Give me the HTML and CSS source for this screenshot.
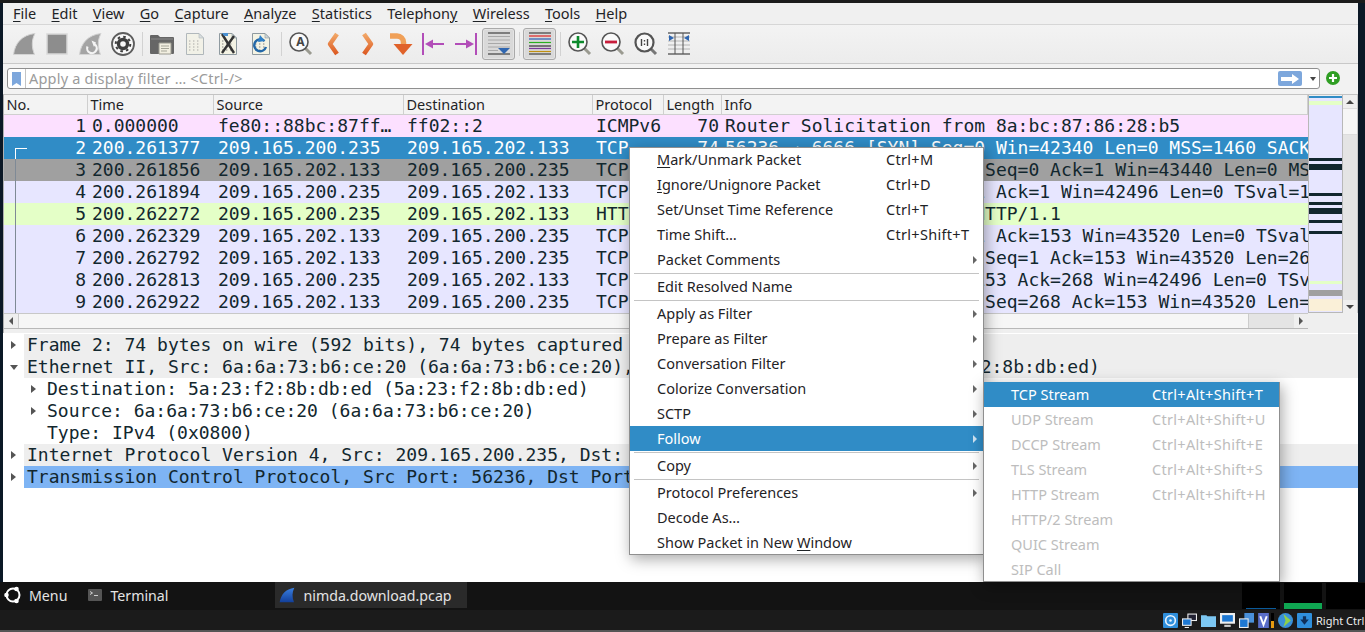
FILE: index.html
```html
<!DOCTYPE html>
<html lang="en">
<head>
<meta charset="utf-8">
<title>nimda.download.pcap</title>
<link rel="stylesheet" href="styles.css">
</head>
<body>
<svg class="defs" width="0" height="0">
  <defs>
    <linearGradient id="og" x1="0" y1="0" x2="0" y2="1"><stop offset="0" stop-color="#f2a868"/><stop offset="1" stop-color="#dc5a22"/></linearGradient>
    <symbol id="fin" viewBox="0 0 24 24"><path d="M1.500 22.500C3 11 10 3 23 1.500 19.500 8 19.500 15 22.500 22.500Z"/></symbol>
    <symbol id="doc" viewBox="0 0 24 24">
      <path d="M3.500 1.500H16L20.500 6V22.500H3.500Z" fill="#f4f3e4" stroke="#8f9aa0"/>
      <path d="M16 1.500V6H20.500Z" fill="#cfd6da" stroke="#8f9aa0" stroke-width=".6"/>
      <path d="M6 9h2m2 0h2m2 0h2M6 12h2m2 0h2m2 0h2M6 15h2m2 0h2m2 0h2M6 18h2m2 0h2m2 0h2" stroke="#a9a9a0" stroke-width="1.400" stroke-dasharray="1 .6"/>
    </symbol>
    <symbol id="lens" viewBox="0 0 24 24">
      <path d="M15.500 15.500L22 22" stroke="#9a9a90" stroke-width="3"/>
      <circle cx="10" cy="10" r="9" fill="#fafafa" stroke="#555" stroke-width="1.600"/>
    </symbol>
  </defs>
</svg>
<div class="topstrip"></div>
<div class="desktop">
  <div class="edge edge-left"></div>
  <main class="window">
    <nav class="menubar">
      <span class="mb"><u>F</u>ile</span>
      <span class="mb"><u>E</u>dit</span>
      <span class="mb"><u>V</u>iew</span>
      <span class="mb"><u>G</u>o</span>
      <span class="mb"><u>C</u>apture</span>
      <span class="mb"><u>A</u>nalyze</span>
      <span class="mb"><u>S</u>tatistics</span>
      <span class="mb">Telephon<u>y</u></span>
      <span class="mb"><u>W</u>ireless</span>
      <span class="mb"><u>T</u>ools</span>
      <span class="mb"><u>H</u>elp</span>
    </nav>
    <div class="toolbar">
      <span class="tb"><svg class="ic fin-gray"><use href="#fin"/></svg></span>
      <span class="tb"><svg class="ic" viewBox="0 0 24 24"><rect x="2" y="2" width="20" height="20" fill="#8d8d8d" stroke="#d9d9d9" stroke-width="1.500"/></svg></span>
      <span class="tb"><svg class="ic" viewBox="0 0 24 24"><path class="fin-path" d="M1.500 22.500C3 11 10 3 23 1.500 19.500 8 19.500 15 22.500 22.500Z"/><path d="M16 12a4.800 4.800 0 1 1-6.500 2.500" fill="none" stroke="#f4f4f4" stroke-width="2.200"/><path d="M13.500 8.500l4.500 2-2 4.500z" fill="#f4f4f4"/></svg></span>
      <span class="tb"><svg class="ic" viewBox="0 0 24 24"><circle cx="12" cy="12" r="11" fill="#f8f8f8" stroke="#5d5d5d" stroke-width="1.800"/><circle cx="12" cy="12" r="6.200" fill="#3f3f3f"/><circle cx="12" cy="12" r="7.300" fill="none" stroke="#3f3f3f" stroke-width="2" stroke-dasharray="2.600 3.130"/><circle cx="12" cy="12" r="2.800" fill="#f8f8f8"/></svg></span>
      <span class="tsep s6"></span>
      <span class="tb"><svg class="ic" viewBox="0 0 24 24"><path d="M0 4a1 1 0 0 1 1-1h7l2 2h13a1 1 0 0 1 1 1v15a1 1 0 0 1-1 1H1a1 1 0 0 1-1-1Z" fill="#666"/><path d="M1 7h22" stroke="#8a8a8a"/><path d="M9 11h12v11H9z" fill="#f1eee0" stroke="#9a9a90"/><path d="M11 14h8M11 16.500h8M11 19h6" stroke="#a5a598"/></svg></span>
      <span class="tb"><svg class="ic fade"><use href="#doc"/></svg></span>
      <span class="tb"><svg class="ic" viewBox="0 0 24 24"><use href="#doc" width="24" height="24"/><path d="M6 2l12 19M18 4L6 21" stroke="#333" stroke-width="2.400"/><path d="M6 1h6v3H8z" fill="#4a90d0"/></svg></span>
      <span class="tb"><svg class="ic" viewBox="0 0 24 24"><use href="#doc" width="24" height="24"/><path d="M15.500 9A6 6 0 1 0 17 15" fill="none" stroke="#2468a8" stroke-width="2.400"/><path d="M11 3l5 6-7 1z" fill="#2f80c8"/></svg></span>
      <span class="tsep s7"></span>
      <span class="tb"><svg class="ic"><use href="#lens"/></svg><b class="lens-a">A</b></span>
      <span class="tb"><svg class="ic" viewBox="0 0 24 24"><path d="M15 2L8 12l7 10" class="arw"/></svg></span>
      <span class="tb"><svg class="ic" viewBox="0 0 24 24"><path d="M9 2l7 10-7 10" class="arw"/></svg></span>
      <span class="tb"><svg class="ic" viewBox="0 0 24 24"><path d="M2 4h7a6.500 6.500 0 0 1 6.500 6.500V14" fill="none" stroke="#f0a058" stroke-width="5.500"/><path d="M5.500 12h19l-9.500 11z" fill="#e0622a"/></svg></span>
      <span class="tb"><svg class="ic" viewBox="0 0 24 24"><path d="M2 1v22" class="pur"/><path d="M10 12h13" class="pur"/><path d="M4 12l8-4.500v9z" fill="#b24db8"/></svg></span>
      <span class="tb"><svg class="ic" viewBox="0 0 24 24"><path d="M22 1v22" class="pur"/><path d="M1 12h13" class="pur"/><path d="M20 12l-8-4.500v9z" fill="#b24db8"/></svg></span>
      <span class="tb pressed"><svg class="ic" viewBox="0 0 24 24"><path d="M1 1h22M1 22h22" stroke="#222" stroke-width="1.200"/><path d="M1 4.500h22M1 8h22M1 11.500h22M1 15h22M1 18.500h10" stroke="#a8a8a8"/><path d="M11 16h12l-6 6z" fill="#2f66b0"/></svg></span>
      <span class="tsep s8"></span>
      <span class="tb pressed"><svg class="ic" viewBox="0 0 24 24"><path d="M1 1h22M1 22h22" stroke="#222" stroke-width="1.200"/><path d="M1 4h22" stroke="#e02020" stroke-width="1.200"/><path d="M1 7h22" stroke="#2a5bb0" stroke-width="1.200"/><path d="M1 10.500h22" stroke="#2ab020" stroke-width="1.200"/><path d="M1 14h22" stroke="#333" stroke-width="1.200"/><path d="M1 16.500h22" stroke="#7a3a9a" stroke-width="1.200"/><path d="M1 19.500h22" stroke="#c09010" stroke-width="1.200"/></svg></span>
      <span class="tsep s7"></span>
      <span class="tb"><svg class="ic"><use href="#lens"/></svg><svg class="over" viewBox="0 0 24 24"><path d="M10 4v12M4 10h12" stroke="#0c8a2c" stroke-width="2.600"/></svg></span>
      <span class="tb"><svg class="ic"><use href="#lens"/></svg><svg class="over" viewBox="0 0 24 24"><path d="M4 10h12" stroke="#c81e3c" stroke-width="2.800"/></svg></span>
      <span class="tb"><svg class="ic" viewBox="0 0 24 24"><path d="M15.500 15.500L22 22" stroke="#777" stroke-width="3"/><circle cx="10.500" cy="10.500" r="9" fill="#fafafa" stroke="#555" stroke-width="2.200"/><path d="M7.500 7v7M13.500 7v7M10.500 8v1.500M10.500 11.500V13" stroke="#444" stroke-width="1.400"/></svg></span>
      <span class="tb"><svg class="ic" viewBox="0 0 24 24"><path d="M1 1h22M1 22h22" stroke="#222" stroke-width="1.200"/><path d="M1 5h22M1 9h22M1 13h22M1 17h22" stroke="#b4b4b4"/><path d="M8 1v21M16 1v21" stroke="#555"/><path d="M2 3v6l5-3zM22 3v6l-5-3z" fill="#2f66b0"/></svg></span>
    </div>
    <div class="filterbar">
      <div class="filterfield">
        <span class="bookmark"><svg width="9" height="14" viewBox="0 0 9 14"><path d="M0 0h9v14L4.500 11 0 14Z" fill="#7da7dc"/></svg></span>
        <span class="placeholder">Apply a display filter … &lt;Ctrl-/&gt;</span>
        <span class="applybtn"><svg width="18" height="10" viewBox="0 0 18 10"><path d="M0 3h11V0l7 5-7 5V7H0Z" fill="#fff"/></svg></span>
        <span class="dropdown"></span>
      </div>
      <svg class="addfilter" width="14" height="14" viewBox="0 0 14 14"><circle cx="7" cy="7" r="7" fill="#2f9e23"/><path d="M7 3v8M3 7h8" stroke="#fff" stroke-width="2.200"/></svg>
    </div>
    <section class="packetpane">
      <div class="listcol">
        <div class="cols header">
          <span class="hc">No.</span><span class="hc">Time</span><span class="hc">Source</span><span class="hc">Destination</span><span class="hc">Protocol</span><span class="hc">Length</span><span class="hc">Info</span>
        </div>
        <div class="cols row icmp"><span class="no">1</span><span class="tm">0.000000</span><span class="sr">fe80::88bc:87ff…</span><span class="ds">ff02::2</span><span class="pr">ICMPv6</span><span class="ln">70</span><span class="in">Router Solicitation from 8a:bc:87:86:28:b5</span></div>
        <div class="cols row sel"><span class="no first">2</span><span class="tm">200.261377</span><span class="sr">209.165.200.235</span><span class="ds">209.165.202.133</span><span class="pr">TCP</span><span class="ln">74</span><span class="in">56236 → 6666 [SYN] Seq=0 Win=42340 Len=0 MSS=1460 SACK_PERM</span></div>
        <div class="cols row grey"><span class="no thread">3</span><span class="tm">200.261856</span><span class="sr">209.165.202.133</span><span class="ds">209.165.200.235</span><span class="pr">TCP</span><span class="ln">74</span><span class="in">6666 → 56236 [SYN, ACK] Seq=0 Ack=1 Win=43440 Len=0 MSS=1460 SACK_PERM</span></div>
        <div class="cols row tcp"><span class="no thread">4</span><span class="tm">200.261894</span><span class="sr">209.165.200.235</span><span class="ds">209.165.202.133</span><span class="pr">TCP</span><span class="ln">66</span><span class="in">56236 → 6666 [ACK] Seq=1 Ack=1 Win=42496 Len=0 TSval=1520309</span></div>
        <div class="cols row http"><span class="no thread">5</span><span class="tm">200.262272</span><span class="sr">209.165.200.235</span><span class="ds">209.165.202.133</span><span class="pr">HTTP</span><span class="ln">218</span><span class="in">GET /dl/nimda.download HTTP/1.1</span></div>
        <div class="cols row tcp"><span class="no thread">6</span><span class="tm">200.262329</span><span class="sr">209.165.202.133</span><span class="ds">209.165.200.235</span><span class="pr">TCP</span><span class="ln">66</span><span class="in">6666 → 56236 [ACK] Seq=1 Ack=153 Win=43520 Len=0 TSval=2530911</span></div>
        <div class="cols row tcp"><span class="no thread">7</span><span class="tm">200.262792</span><span class="sr">209.165.202.133</span><span class="ds">209.165.200.235</span><span class="pr">TCP</span><span class="ln">333</span><span class="in">6666 → 56236 [PSH, ACK] Seq=1 Ack=153 Win=43520 Len=267 TSval=2530911</span></div>
        <div class="cols row tcp"><span class="no thread">8</span><span class="tm">200.262813</span><span class="sr">209.165.200.235</span><span class="ds">209.165.202.133</span><span class="pr">TCP</span><span class="ln">66</span><span class="in">56236 → 6666 [ACK] Seq=153 Ack=268 Win=42496 Len=0 TSval=1520309</span></div>
        <div class="cols row tcp"><span class="no thread">9</span><span class="tm">200.262922</span><span class="sr">209.165.202.133</span><span class="ds">209.165.200.235</span><span class="pr">TCP</span><span class="ln">66</span><span class="in">6666 → 56236 [FIN, ACK] Seq=268 Ack=153 Win=43520 Len=0 TSval=2530911</span></div>
      </div>
      <div class="minimap"></div>
      <div class="vscroll">
        <span class="vbtn"><i class="tri-up"></i></span>
        <span class="vthumb"></span>
        <span class="vtrack"></span>
        <span class="vbtn"><i class="tri-down"></i></span>
      </div>
    </section>
    <div class="hscrollrow">
      <div class="hscroll">
        <span class="hbtn"><i class="tri-left"></i></span>
        <span class="hthumb"></span>
        <span class="htrack"></span>
        <span class="hbtn"><i class="tri-right"></i></span>
      </div>
    </div>
    <section class="details">
      <div class="dr top"><i class="tw closed"></i><span>Frame 2: 74 bytes on wire (592 bits), 74 bytes captured (592 bits)</span></div>
      <div class="dr top"><i class="tw open"></i><span>Ethernet II, Src: 6a:6a:73:b6:ce:20 (6a:6a:73:b6:ce:20), Dst: 5a:23:f2:8b:db:ed (5a:23:f2:8b:db:ed)</span></div>
      <div class="dr sub"><i class="tw closed"></i><span>Destination: 5a:23:f2:8b:db:ed (5a:23:f2:8b:db:ed)</span></div>
      <div class="dr sub"><i class="tw closed"></i><span>Source: 6a:6a:73:b6:ce:20 (6a:6a:73:b6:ce:20)</span></div>
      <div class="dr sub"><i class="tw none"></i><span>Type: IPv4 (0x0800)</span></div>
      <div class="dr top"><i class="tw closed"></i><span>Internet Protocol Version 4, Src: 209.165.200.235, Dst: 209.165.202.133</span></div>
      <div class="dr top hl"><i class="tw closed"></i><span>Transmission Control Protocol, Src Port: 56236, Dst Port: 6666, Seq: 0, Len: 0</span></div>
    </section>
  </main>
  <div class="edge edge-right"></div>
</div>
<footer class="taskbar">
  <div class="panelrow">
    <svg class="ubuntu" width="18" height="18" viewBox="0 0 18 18"><circle cx="9" cy="9" r="6.500" fill="none" stroke="#fff" stroke-width="2"/><circle cx="2.500" cy="9" r="2.300" fill="#fff"/><circle cx="12.500" cy="3" r="2.300" fill="#fff"/><circle cx="12.500" cy="15" r="2.300" fill="#fff"/></svg>
    <span class="tlabel menu-l">Menu</span>
    <svg class="term" width="14" height="12" viewBox="0 0 14 12"><rect width="14" height="12" rx="1" fill="#555"/><path d="M2 2.500l2.500 1.500L2 5.500M6 6.500h4" stroke="#ddd" fill="none" stroke-width=".9"/></svg>
    <span class="tlabel term-l">Terminal</span>
    <span class="tasktab">
      <svg width="16" height="16" viewBox="0 0 24 24"><defs><linearGradient id="bf" x1="0" y1="0" x2="0" y2="1"><stop offset="0" stop-color="#3a7fe0"/><stop offset="1" stop-color="#123f9a"/></linearGradient></defs><path d="M1 23C3 11 10 3 23 1 19.500 8 19.500 15 22.500 23Z" fill="url(#bf)"/></svg>
      <span class="tlabel">nimda.download.pcap</span>
    </span>
    <span class="graphs">
      <span class="graph g1"></span>
      <span class="graph g2"></span>
      <span class="graph g3"></span>
    </span>
  </div>
  <div class="trayrow">
    <svg class="tray" viewBox="0 0 14 14"><rect width="14" height="14" rx="1" fill="#2f8fdc"/><circle cx="7" cy="7" r="4.500" fill="none" stroke="#eaf4ff" stroke-width="1.500"/><circle cx="7" cy="7" r="1.200" fill="#eaf4ff"/></svg>
    <svg class="tray" viewBox="0 0 14 14"><rect x="5.500" y="1" width="8" height="6" fill="#223" stroke="#eee"/><rect x=".5" y="5.500" width="8" height="6" fill="#1e78d2" stroke="#eee"/><path d="M2.500 13.500h4" stroke="#eee"/></svg>
    <svg class="tray" viewBox="0 0 14 14"><path d="M0 2h5l1 1h8v10H0Z" fill="#7cc7f2"/></svg>
    <svg class="tray" viewBox="0 0 14 14"><rect x="0" y="0" width="14" height="10" fill="#eee"/><rect x="2" y="2" width="10" height="6" fill="#1e78d2"/><rect x="4" y="11" width="6" height="2" fill="#ccc"/></svg>
    <svg class="tray" viewBox="0 0 14 14"><rect x="5" y="0" width="9" height="9" fill="#4a90d9"/><rect x=".5" y="5.500" width="8" height="8" fill="#1e78d2" stroke="#eee"/></svg>
    <svg class="tray tray-v" viewBox="0 0 10 14"><rect width="10" height="14" fill="#5a6ec8"/><path d="M2 3l3 8 3-8" stroke="#fff" fill="none" stroke-width="1.800"/></svg>
    <span class="ind"></span>
    <svg class="tray" viewBox="0 0 14 14"><circle cx="7" cy="7" r="7" fill="#3a90d8"/><path d="M5 1l7 6-7 6 2-6Z" fill="#8fd04a"/></svg>
    <svg class="tray" viewBox="0 0 14 14"><rect width="14" height="14" rx="1" fill="#2f8fdc"/><path d="M7 11L3 6h2.500V3h3v3H11Z" fill="#10305a"/></svg>
    <span class="rightctrl">Right Ctrl</span>
  </div>
</footer>
<div class="ctx mainmenu">
  <div class="mi"><span class="lb"><u>M</u>ark/Unmark Packet</span><span class="key">Ctrl+M</span></div>
  <div class="mi"><span class="lb"><u>I</u>gnore/Unignore Packet</span><span class="key">Ctrl+D</span></div>
  <div class="mi"><span class="lb">Set/Unset Time Reference</span><span class="key">Ctrl+T</span></div>
  <div class="mi"><span class="lb">Time Shift…</span><span class="key">Ctrl+Shift+T</span></div>
  <div class="mi more"><span class="lb">Packet Comments</span></div>
  <div class="msep"></div>
  <div class="mi"><span class="lb">Edit Resolved Name</span></div>
  <div class="msep"></div>
  <div class="mi more"><span class="lb">Apply as Filter</span></div>
  <div class="mi more"><span class="lb">Prepare as Filter</span></div>
  <div class="mi more"><span class="lb">Conversation Filter</span></div>
  <div class="mi more"><span class="lb">Colorize Conversation</span></div>
  <div class="mi more"><span class="lb">SCTP</span></div>
  <div class="mi more active"><span class="lb">Follow</span></div>
  <div class="msep"></div>
  <div class="mi more"><span class="lb">Copy</span></div>
  <div class="msep"></div>
  <div class="mi more"><span class="lb">Protocol Preferences</span></div>
  <div class="mi"><span class="lb">Decode As…</span></div>
  <div class="mi"><span class="lb">Show Packet in New <u>W</u>indow</span></div>
</div>
<div class="ctx submenu">
  <div class="mi active"><span class="lb">TCP Stream</span><span class="key">Ctrl+Alt+Shift+T</span></div>
  <div class="mi off"><span class="lb">UDP Stream</span><span class="key">Ctrl+Alt+Shift+U</span></div>
  <div class="mi off"><span class="lb">DCCP Stream</span><span class="key">Ctrl+Alt+Shift+E</span></div>
  <div class="mi off"><span class="lb">TLS Stream</span><span class="key">Ctrl+Alt+Shift+S</span></div>
  <div class="mi off"><span class="lb">HTTP Stream</span><span class="key">Ctrl+Alt+Shift+H</span></div>
  <div class="mi off"><span class="lb">HTTP/2 Stream</span></div>
  <div class="mi off"><span class="lb">QUIC Stream</span></div>
  <div class="mi off"><span class="lb">SIP Call</span></div>
</div>
</body>
</html>
```
FILE: styles.css
```css
* { box-sizing: border-box; }
html, body { margin: 0; padding: 0; }
body {
  position: relative;
  width: 1365px;
  height: 632px;
  overflow: hidden;
  background: #0d1620;
  font-family: "Noto Sans", "Open Sans", sans-serif;
  font-size: 14.5px;
  color: #1f2326;
  display: flex;
  flex-direction: column;
}
.defs { position: absolute; }
.topstrip { height: 3px; background: #1b1b1b; flex: none; }
.desktop { display: flex; height: 579px; flex: none; }
.edge { flex: none; background: #0b1826; }
.edge-left { width: 3px; }
.edge-right { width: 7px; }
.window {
  width: 1355px;
  background: #efefef;
  display: flex;
  flex-direction: column;
}

/* menu bar */
.menubar {
  height: 22px;
  flex: none;
  display: flex;
  align-items: center;
  padding: 0 0 2px 10px;
  border-bottom: 1px solid #d6d6d6;
  background: #f0f0f0;
  font-size: 14.5px;
}
.mb { margin-right: 15.3px; white-space: nowrap; line-height: 20px; }
u { text-underline-offset: 2px; text-decoration-thickness: 1px; }

/* toolbar */
.toolbar {
  height: 39px;
  flex: none;
  display: flex;
  align-items: center;
  padding-left: 4px;
  border-bottom: 1px solid #c8c8c8;
  background: linear-gradient(#f3f3f3, #ececec);
}
.tb {
  position: relative;
  width: 33px;
  height: 32px;
  flex: none;
  display: flex;
  align-items: center;
  justify-content: center;
}
.pressed {
  background: #d9d9d9;
  border: 1px solid #aaa;
  border-radius: 3px;
  box-shadow: inset 0 0 0 1px #e4e4e4;
}
.ic { width: 24px; height: 24px; display: block; overflow: visible; }
.fin-gray { fill: #969696; stroke: #d4d4d4; }
.fin-path { fill: #a4a4a4; stroke: #d4d4d4; }
.fade { opacity: .65; }
.arw { fill: none; stroke: url(#og); stroke-width: 4.500px; stroke-linejoin: round; }
.pur { stroke: #b24db8; stroke-width: 2px; fill: none; }
.lens-a { position: absolute; left: 11px; top: 6px; font-size: 12px; line-height: 16px; font-weight: 700; color: #444; width: 11px; text-align: center; }
.over { position: absolute; left: 5px; top: 4px; width: 24px; height: 24px; }
.tsep { flex: none; position: relative; height: 24px; }
.tsep::after { content: ""; position: absolute; left: 50%; top: 0; bottom: 0; border-left: 1px solid #d2d2d2; }
.s6 { width: 6px; }
.s7 { width: 7px; }
.s8 { width: 8px; }

/* filter */
.filterbar {
  height: 30px;
  flex: none;
  display: flex;
  align-items: flex-start;
  padding: 4px 0 0 4px;
  background: #f2f2f2;
}
.filterfield {
  width: 1313px;
  height: 21px;
  background: #fff;
  border: 1px solid #8f8f8f;
  border-radius: 3px;
  display: flex;
  align-items: center;
}
.bookmark {
  width: 18px;
  height: 19px;
  flex: none;
  display: flex;
  align-items: center;
  justify-content: center;
  border-right: 1px solid #c4c4c4;
}
.placeholder { margin-left: 3px; color: #9b9b9b; flex: 1; font-size: 14.5px; letter-spacing: .2px; line-height: 19px; }
.applybtn {
  width: 24px;
  height: 15px;
  flex: none;
  background: #7da7dc;
  border-radius: 2px;
  display: flex;
  align-items: center;
  justify-content: center;
}
.dropdown {
  width: 17px;
  height: 19px;
  flex: none;
  position: relative;
}
.dropdown::after {
  content: "";
  position: absolute;
  left: 8px;
  top: 8px;
  border: 3.5px solid transparent;
  border-top: 4px solid #444;
  border-bottom: 0;
}
.addfilter { margin: 3px 0 0 6px; flex: none; }

/* packet list */
.packetpane {
  flex: none;
  height: 219px;
  display: flex;
  border-left: 1px solid #b0b0b0;
  border-top: 1px solid #c4c4c4;
}
.listcol { width: 1304px; flex: none; font-family: "DejaVu Sans Mono", monospace; }
.cols {
  display: grid;
  grid-template-columns: 84px 126px 190px 189px 71px 58px 586px;
}
.header {
  height: 20px;
  font-family: "Noto Sans", sans-serif;
  font-size: 14.5px;
  background: #f3f3f3;
  border-bottom: 1px solid #cfcfcf;
}
.hc {
  padding-left: 2.500px;
  line-height: 19px;
  border-right: 1px solid #cfcfcf;
  overflow: hidden;
  white-space: nowrap;
  color: #1f2326;
}
.row {
  height: 22px;
  line-height: 22px;
  font-size: 18px;
  color: #12272e;
  white-space: nowrap;
}
.row span { overflow: hidden; padding-left: 3px; }
.row .no { position: relative; text-align: right; padding-right: 2px; }
.row .tm { padding-left: 4px; }
.row .sr { padding-left: 4px; }
.row .pr { padding-left: 3px; }
.row .ln { text-align: right; padding-right: 3px; }
.icmp { background: #fce0ff; }
.tcp { background: #e7e6ff; }
.http { background: #e4ffc7; }
.grey { background: #a0a0a0; }
.sel { background: #308cc6; color: #fff; }
.first::before {
  content: "";
  position: absolute;
  left: 11px;
  top: 11px;
  bottom: 0;
  width: 11px;
  border-left: 1px solid #fff;
  border-top: 1px solid #fff;
}
.thread::before {
  content: "";
  position: absolute;
  left: 11px;
  top: 0;
  bottom: 0;
  border-left: 1px solid #7f8a96;
}
.minimap {
  width: 35px;
  flex: none;
  height: 218px;
  border: 1px solid #b8b8b8;
  border-width: 0 1px 1px 1px;
  background:
    linear-gradient(to bottom,
      #efefef 0 1px, #308cc6 1px 3px, #e7e6ff 3px 6px, #e4ffc7 6px 10px,
      #e7e6ff 10px 63px, #12272e 63px 66px, #e7e6ff 66px 69px, #12272e 69px 75px,
      #e7e6ff 75px 98px, #12272e 98px 101px, #e7e6ff 101px 107px, #12272e 107px 110px,
      #e7e6ff 110px 113px, #12272e 113px 119px, #e7e6ff 119px 125px, #12272e 125px 128px,
      #e7e6ff 128px 136px, #12272e 136px 139px, #e7e6ff 139px 186px, #e4ffc7 186px 189px,
      #e7e6ff 189px 195px, #a0a0a0 195px 201px, #e7e6ff 201px 204px, #faf0d8 204px 216px, #e7e6ff 216px 217px);
}
.vscroll {
  width: 15px;
  flex: none;
  height: 218px;
  display: flex;
  flex-direction: column;
  background: #e6e6e6;
  border-right: 1px solid #c8c8c8;
}
.vbtn { height: 13px; flex: none; background: #efefef; display: flex; align-items: center; justify-content: center; }
.vthumb { height: 27px; flex: none; background: #f6f6f6; border-top: 1px solid #ddd; border-bottom: 1px solid #ddd; }
.vtrack { flex: 1; background: #e4e4e4; }
.tri-up, .tri-down, .tri-left, .tri-right { display: block; width: 0; height: 0; border: 4px solid transparent; }
.tri-up { border-top: 0; border-bottom: 4px solid #444; }
.tri-down { border-bottom: 0; border-top: 4px solid #444; }
.tri-left { border-left: 0; border-right: 4px solid #555; }
.tri-right { border-right: 0; border-left: 4px solid #555; }
.hscrollrow {
  height: 20px;
  flex: none;
  background: #efefef;
  border-left: 1px solid #b0b0b0;
}
.hscroll {
  width: 1304px;
  height: 16px;
  display: flex;
  border-top: 1px solid #c8c8c8;
  border-bottom: 1px solid #b8b8b8;
}
.hbtn { width: 14px; flex: none; background: #efefef; display: flex; align-items: center; justify-content: center; }
.hthumb { width: 1231px; flex: none; background: #f6f6f6; border-left: 1px solid #ccc; border-right: 1px solid #ccc; }
.htrack { flex: 1; background: #e4e4e4; }

/* details */
.details {
  flex: 1;
  background: #fff;
  padding-top: 1px;
  font-family: "DejaVu Sans Mono", monospace;
  font-size: 18px;
  color: #12272e;
}
.dr { height: 22px; line-height: 22px; display: flex; white-space: nowrap; position: relative; }
.dr span { flex: 1; }
.top { padding-left: 21px; }
.top span { background: #eeeeee; padding-left: 3px; }
.sub span { padding-left: 0; }
.sub { padding-left: 44px; }
.hl span { background: #7eb4f4; }
.tw { position: absolute; width: 0; height: 0; border: 4px solid transparent; }
.top .closed { left: 8px; top: 7px; border-right: 0; border-left: 5px solid #555; }
.top .open { left: 7px; top: 9px; border-bottom: 0; border-top: 5px solid #555; }
.sub .closed { left: 28px; top: 7px; border-right: 0; border-left: 5px solid #555; }
.none { display: none; }

/* taskbar */
.taskbar { flex: 1; display: flex; flex-direction: column; background: #1b1b1b; color: #dcdcdc; border-bottom: 2px solid #555; }
.panelrow {
  height: 28px;
  flex: none;
  display: flex;
  align-items: center;
  background: #131313;
  padding: 0 0 2px 4px;
}
.tlabel { font-size: 14.2px; color: #e4e4e4; white-space: nowrap; }
.menu-l { margin-left: 7px; }
.term { margin-left: 21px; }
.term-l { margin-left: 8px; }
.tasktab {
  width: 192px;
  height: 26px;
  background: #2a2a2a;
  display: flex;
  align-items: center;
  gap: 8px;
  padding-left: 4px;
  margin-left: 107px;
}
.graphs { margin-left: auto; display: flex; gap: 4px; height: 26px; align-self: flex-start; margin-top: 1px; }
.graph { width: 38px; background: #000; position: relative; }
.g3 { width: 39px; }
.g1::after { content: ""; position: absolute; left: 4px; right: 4px; bottom: 0; height: 1px; background: #0a5a9a; }
.g2::after { content: ""; position: absolute; left: 0; right: 0; bottom: 0; height: 6px; background: #0fa652; }
.trayrow {
  flex: 1;
  display: flex;
  align-items: center;
  justify-content: flex-end;
  gap: 4px;
}
.tray { width: 15px; height: 15px; flex: none; }
.tray-v { width: 11px; }
.ind { width: 3px; height: 15px; margin-left: -2px; background: linear-gradient(#000 0 50%, #e59a10 50%); flex: none; }
.rightctrl { font-size: 11px; color: #eee; white-space: nowrap; width: 49px; }

/* context menus */
.ctx {
  position: absolute;
  background: #fff;
  border: 1px solid #8f8f8f;
  box-shadow: 2px 4px 14px rgba(0, 0, 0, .35);
  font-size: 14.5px;
  color: #1f2326;
}
.mainmenu { left: 629px; top: 147px; width: 355px; }
.submenu { left: 983px; top: 382px; width: 297px; }
.mi {
  height: 25px;
  line-height: 25px;
  display: flex;
  padding-left: 27px;
  position: relative;
  white-space: nowrap;
}
.mi:first-child { margin-top: -1px; }
.mi:last-child { margin-bottom: -1px; }
.lb { flex: none; }
.key { letter-spacing: .3px; }
.mainmenu .lb { width: 229px; }
.submenu .lb { width: 141px; }
.mi u { text-underline-offset: 2px; }
.more::after {
  content: "";
  position: absolute;
  right: 6px;
  top: 9px;
  border: 4px solid transparent;
  border-right: 0;
  border-left: 4px solid #666;
}
.active { background: #308cc6; color: #fff; }
.active.more::after { border-left-color: #cfe3f2; }
.off { color: #bdbdbd; }
.msep { height: 2px; margin: 0 4px 0 4px; border-bottom: 1px solid #c4c4c4; }
```
